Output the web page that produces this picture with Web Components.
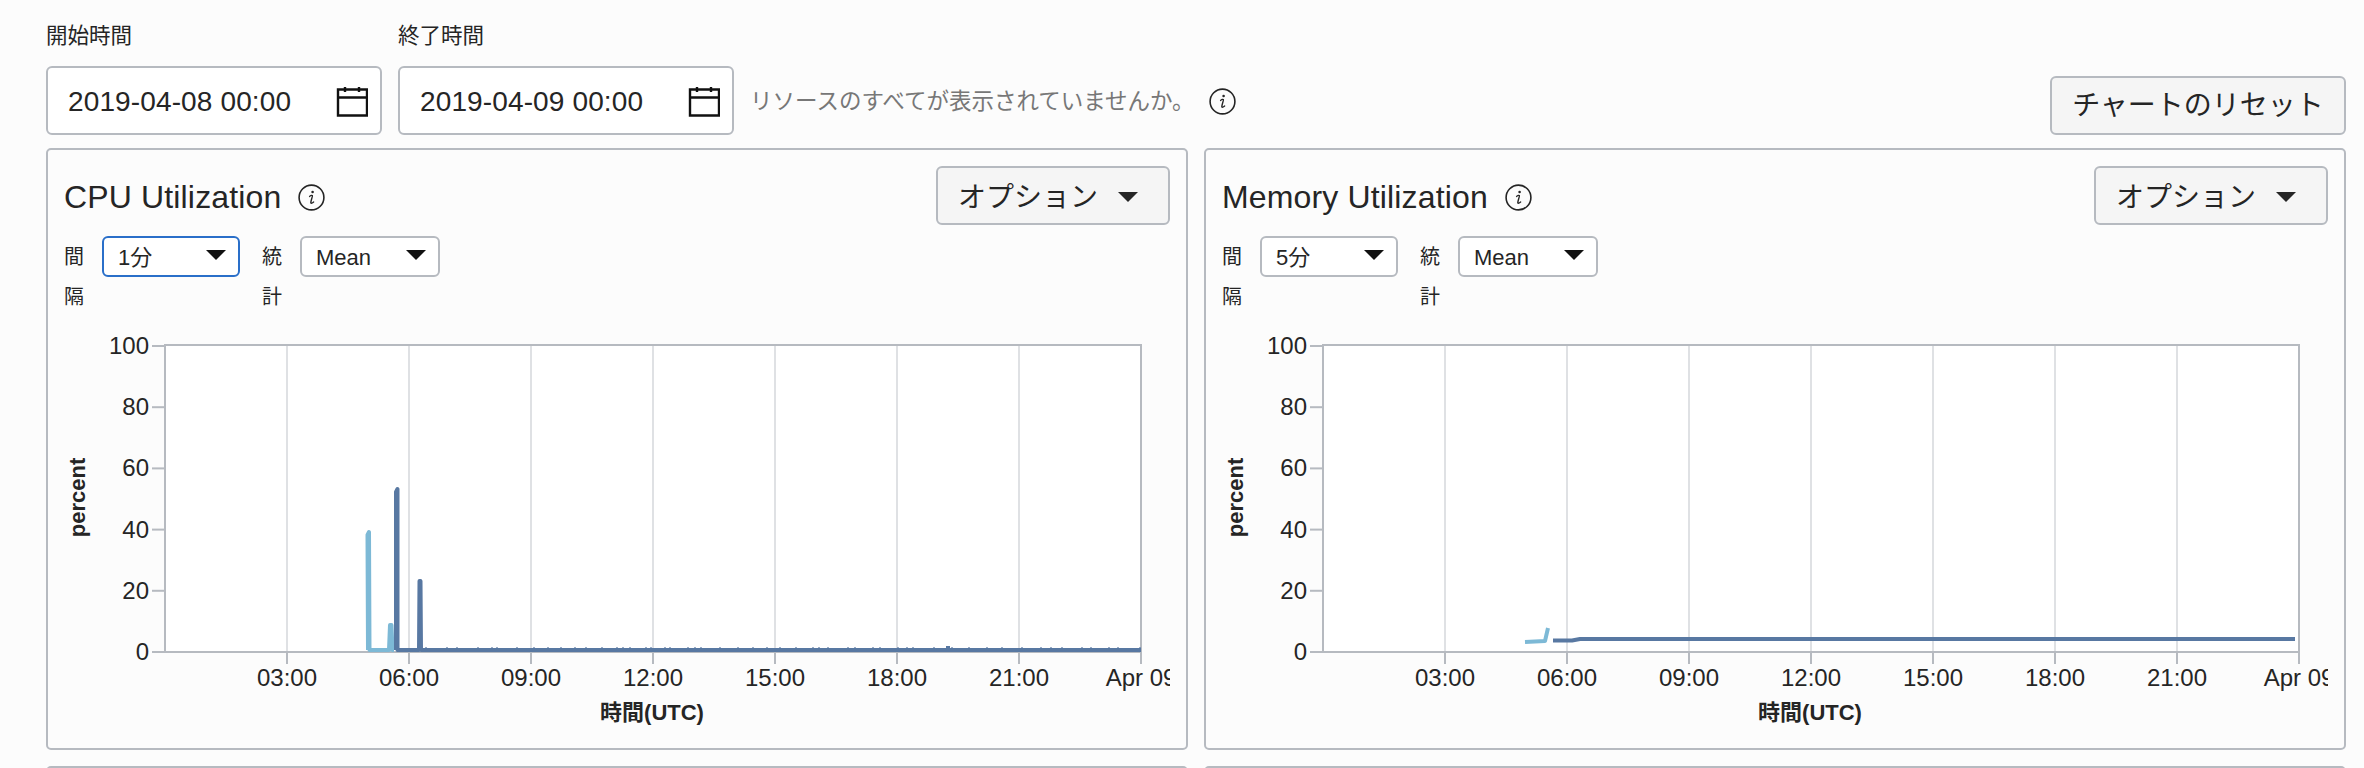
<!DOCTYPE html>
<html lang="ja">
<head>
<meta charset="utf-8">
<title>Metrics</title>
<style>
  html, body { margin: 0; height: 768px; overflow: hidden; background: #fcfcfc; }
  body { font-family: "Liberation Sans", "Noto Sans CJK JP", sans-serif; color: #252525; }
  metrics-page { height: 768px; overflow: hidden; }
</style>
</head>
<body>
<metrics-page>
  <date-field slot="toolbar" label="開始時間" value="2019-04-08 00:00"></date-field>
  <date-field slot="toolbar" label="終了時間" value="2019-04-09 00:00"></date-field>
  <resource-hint slot="toolbar">リソースのすべてが表示されていませんか。</resource-hint>
  <reset-button slot="toolbar">チャートのリセット</reset-button>
  <metric-panel heading="CPU Utilization" interval="1分" focused chart="cpu" left="64"></metric-panel>
  <metric-panel heading="Memory Utilization" interval="5分" chart="memory" left="1222"></metric-panel>
  <metric-panel></metric-panel>
  <metric-panel></metric-panel>
</metrics-page>

<script>
const FONT = `"Liberation Sans", "Noto Sans CJK JP", sans-serif`;
const BORDER = '#b6bac0';

customElements.define('info-icon', class extends HTMLElement {
  connectedCallback() {
    this.attachShadow({ mode: 'open' }).innerHTML =
      `<style>:host{display:block;width:27px;height:27px;flex:none}svg{display:block}</style>` +
      `<svg width="27" height="27" viewBox="0 0 27 27" fill="none">` +
      `<circle cx="13.5" cy="13.5" r="12.4" stroke="#252525" stroke-width="1.6"/>` +
      // italic i
      `<circle cx="14.6" cy="8" r="1.3" fill="#252525"/>` +
      `<path d="M11.6 12.4c1-.9 2.5-1.4 2.8-.8.3.6-1.700 5.600-1.600 7 .1 1.100 1.600.5 2.800-.6" stroke="#252525" stroke-width="1.400" stroke-linecap="round"/>` +
      `</svg>`;
  }
});

customElements.define('date-field', class extends HTMLElement {
  connectedCallback() {
    this.attachShadow({ mode: 'open' }).innerHTML = `
      <style>
        :host{display:block;width:336px;flex:none}
        label{display:block;font-size:21.500px;line-height:30px;height:45px;padding-top:21px}
        .box{box-sizing:border-box;height:69px;border:2px solid ${BORDER};border-radius:6px;background:#fff;
          display:flex;align-items:center;justify-content:space-between;padding:2px 12px 0 20px;font-size:28px;letter-spacing:.13px}
        svg{display:block}
      </style>
      <label>${this.getAttribute('label')}</label>
      <div class="box">
        <span>${this.getAttribute('value')}</span>
        <svg width="32" height="30" viewBox="0 0 32 30" fill="none" stroke="#111" stroke-width="2.400">
          <path d="M2 2.500h29v26h-29zM2 10.500h29M9 0v5M23 0v5"/>
        </svg>
      </div>`;
  }
});

customElements.define('resource-hint', class extends HTMLElement {
  connectedCallback() {
    this.attachShadow({ mode: 'open' }).innerHTML = `
      <style>
        :host{display:flex;align-items:center;gap:14px;height:69px;font-size:22.500px;color:#777}
        span{position:relative;top:-2px;white-space:nowrap}
        info-icon{position:relative;top:1px}
      </style>
      <span><slot></slot></span><info-icon></info-icon>`;
  }
});

customElements.define('reset-button', class extends HTMLElement {
  connectedCallback() {
    this.attachShadow({ mode: 'open' }).innerHTML = `
      <style>
        :host{display:block;box-sizing:border-box;margin-left:auto;width:296px;height:59px;border:2px solid ${BORDER};
          border-radius:6px;background:#f5f5f5;font-size:28px;line-height:55px;text-align:center;white-space:nowrap}
      </style><slot></slot>`;
  }
});

customElements.define('option-button', class extends HTMLElement {
  connectedCallback() {
    this.attachShadow({ mode: 'open' }).innerHTML = `
      <style>
        :host{display:flex;align-items:center;box-sizing:border-box;width:234px;height:59px;flex:none;gap:20px;padding:0 0 2px 20px;
          border:2px solid ${BORDER};border-radius:6px;background:#f5f5f5;font-size:28px;letter-spacing:0}
        i{display:block;width:0;height:0;border:10px solid transparent;border-top-color:#252525;border-bottom:0;margin-top:5px}
      </style><slot></slot><i></i>`;
  }
});

customElements.define('select-box', class extends HTMLElement {
  connectedCallback() {
    const focused = this.hasAttribute('focused');
    this.attachShadow({ mode: 'open' }).innerHTML = `
      <style>
        :host{display:flex;align-items:center;justify-content:space-between;box-sizing:border-box;height:41px;flex:none;
          width:var(--w,138px);padding:2px 12px 0 14px;border:2px solid ${focused ? '#2a6fc9' : BORDER};border-radius:6px;
          background:#fff;font-size:22px}
        i{display:block;width:0;height:0;border:10px solid transparent;border-top-color:#111;border-bottom:0;margin-top:-6px}
      </style><slot></slot><i></i>`;
  }
});

// data paths in page coordinates
const CHARTS = {
  cpu: {
    light: 'M368 650 L367.500 535 L369 532 L369.500 650 L389 650 L390 625 L391.500 625 L392.500 650 L394 650',
    dark: 'M396 650 L396 492 L397.500 489 L397.500 650 L419 650 L419.500 581 L420.500 581 L421 650 L1141 650',
    bumps: [[948, 646]],
    noise: [425, 1140]
  },
  memory: {
    light: 'M1525 642 L1545 641 L1548 628',
    dark: 'M1553 640.500 L1572 640.500 L1580 639 L2295 639'
  }
};

customElements.define('metric-chart', class extends HTMLElement {
  connectedCallback() {
    const left = +this.getAttribute('left');
    const data = CHARTS[this.getAttribute('data')];
    const oy = 320; // svg top on the page
    const x0 = 101, top = 345 - oy, base = 652 - oy, w = 976;
    let s = `<rect x="${x0}" y="${top}" width="${w}" height="${base - top}" fill="#fff"/>`;
    const times = ['03:00', '06:00', '09:00', '12:00', '15:00', '18:00', '21:00', 'Apr 09'];
    times.forEach((t, i) => {
      const x = x0 + (i + 1) * 122;
      if (i < 7) s += `<path d="M${x} ${top}V${base}" stroke="#dfe1e4" stroke-width="2"/>`;
      s += `<path d="M${x} ${base}v12" stroke="${BORDER}" stroke-width="2"/>`;
      s += `<text x="${x}" y="${base + 34}" text-anchor="middle" font-size="24">${t}</text>`;
    });
    [0, 20, 40, 60, 80, 100].forEach(v => {
      const y = base - v * 3.06;
      s += `<path d="M${x0 - 13} ${y}h13" stroke="${BORDER}" stroke-width="2"/>`;
      s += `<text x="${x0 - 16}" y="${y + 8}" text-anchor="end" font-size="24">${v}</text>`;
    });
    s += `<path d="M${x0} ${top}H${x0 + w}V${base}H${x0}Z" fill="none" stroke="${BORDER}" stroke-width="2"/>`;
    if (data) {
      s += `<g transform="translate(${-left} ${-oy})" fill="none" stroke-width="4" stroke-linejoin="round">` +
        `<path d="${data.light}" stroke="#7db9d6"/><path d="${data.dark}" stroke="#5878a2"/></g>`;
      (data.bumps || []).forEach(([x, y]) => {
        s += `<rect x="${x - left - 2}" y="${y - oy}" width="4" height="${650 - y}" fill="#5878a2"/>`;
      });
      // the small jitter along the flat part of the line
      if (data.noise) {
        let seed = 7;
        for (let x = data.noise[0]; x < data.noise[1];) {
          seed = (seed * 137 + 59) % 256;
          s += `<rect x="${x - left}" y="${647 - oy}" width="2" height="1.500" fill="#5878a2" opacity=".6"/>`;
          x += 5 + seed % 18;
        }
      }
    }
    s += `<text transform="translate(13.500 ${(top + base) / 2 - 1}) rotate(-90)" text-anchor="middle" font-size="22" font-weight="700" dy="7">percent</text>`;
    s += `<text x="${x0 + 487}" y="${base + 68}" text-anchor="middle" font-size="22" font-weight="700">時間(UTC)</text>`;
    this.attachShadow({ mode: 'open' }).innerHTML = `
      <style>:host{display:block;height:410px;margin-top:4px;font-family:${FONT}}
      svg{display:block;overflow:hidden} text{fill:#252525}</style>
      <svg width="1106" height="410" viewBox="0 0 1106 410">${s}</svg>`;
  }
});

customElements.define('metric-panel', class extends HTMLElement {
  connectedCallback() {
    const heading = this.getAttribute('heading');
    const focused = this.hasAttribute('focused') ? 'focused' : '';
    const chart = this.getAttribute('chart');
    const style = `
      <style>
        :host{display:block;box-sizing:border-box;height:602px;border:2px solid ${BORDER};border-radius:5px;padding:16px}
        header{display:flex;align-items:center;height:59px;gap:17px;font-size:32px}
        header h2{margin:0;font:inherit;position:relative;top:2px;letter-spacing:.15px}
        header info-icon{position:relative;top:2px}
        option-button{margin-left:auto}
        .filters{display:flex;margin-top:11px;font-size:20px;line-height:40px;height:80px;color:#252525}
        .filters b{font-weight:400;width:20px;margin-right:18px;padding-top:1px}
        .filters b:nth-of-type(2){margin-left:22px}
        select-box:last-child{--w:140px}
      </style>`;
    // the panels of the next row only show their top border
    if (!heading) {
      this.attachShadow({ mode: 'open' }).innerHTML = style;
      return;
    }
    this.attachShadow({ mode: 'open' }).innerHTML = `${style}
      <header><h2>${heading}</h2><info-icon></info-icon><option-button>オプション</option-button></header>
      <div class="filters">
        <b>間隔</b><select-box ${focused}>${this.getAttribute('interval')}</select-box>
        <b>統計</b><select-box>Mean</select-box>
      </div>
      <metric-chart data="${chart}" left="${this.getAttribute('left')}"></metric-chart>`;
  }
});

customElements.define('metrics-page', class extends HTMLElement {
  connectedCallback() {
    this.attachShadow({ mode: 'open' }).innerHTML = `
      <style>
        :host{display:block;box-sizing:border-box;padding:0 18px 0 46px}
        .toolbar{display:flex;align-items:flex-end;gap:16px;height:135px;margin-bottom:13px}
        .grid{display:grid;grid-template-columns:1142px 1142px;gap:16px}
      </style>
      <div class="toolbar"><slot name="toolbar"></slot></div>
      <div class="grid"><slot></slot></div>`;
  }
});
</script>
</body>
</html>
